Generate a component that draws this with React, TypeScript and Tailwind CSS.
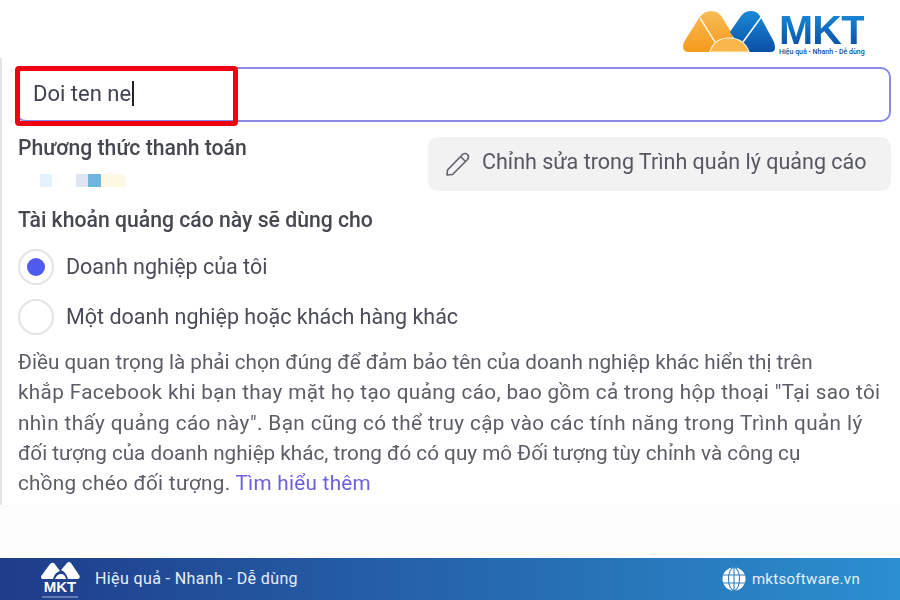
const fontStack = { fontFamily: "Roboto, 'Liberation Sans', sans-serif" };

function TopLogo() {
  return (
    <div className="flex items-start gap-[3px]">
      <svg width="93" height="42" viewBox="0 0 93 42">
        <defs>
          <linearGradient id="org" x1="0" y1="0" x2="0" y2="1">
            <stop offset="0" stopColor="#f7bb55" />
            <stop offset="1" stopColor="#f59a1c" />
          </linearGradient>
          <linearGradient id="blu" x1="0" y1="0" x2="0" y2="1">
            <stop offset="0" stopColor="#1a8ad8" />
            <stop offset="1" stopColor="#0a4fa6" />
          </linearGradient>
        </defs>
        <path d="M5 41 Q-2 40 1 31 L16 7 Q21 0 28 0 Q35 0 39 6 L50 24 L46 41 Z" fill="url(#org)" />
        <path d="M47 21 L58 5 Q62 0 68 0 Q74 0 77 5 L91 31 Q94 41 88 41 L60 41 Z" fill="url(#blu)" />
        <path d="M27 41 Q31 27 46 27 Q61 27 66 41 Z" fill="#f9b64a" stroke="#fff4dc" strokeWidth="1.2" />
        <path d="M17 7 L32 31" stroke="#fff4dc" strokeWidth="1.5" fill="none" />
        <path d="M79 5 L60 31" stroke="#ffffff" strokeWidth="1.5" fill="none" />
      </svg>
      <div className="flex flex-col w-[85px] mt-[2px]">
        <span className="text-[41px] leading-[34px] font-black tracking-[-0.8px] bg-gradient-to-b from-[#1a8ad8] to-[#0a4fa6] bg-clip-text text-transparent" style={{ fontFamily: "'Liberation Sans', sans-serif" }}>
          MKT
        </span>
        <span className="text-[7px] leading-[9px] font-medium text-[#0f4f9c] mt-[1px] whitespace-nowrap">Hiệu quả - Nhanh - Dễ dùng</span>
      </div>
    </div>
  );
}

function FooterLogo() {
  return (
    <div className="flex flex-col items-center w-[40px] pt-[2px]">
      <svg width="39" height="19" viewBox="0 0 39 19">
        <path d="M1 17 Q-1 15 1 13 L9 2 Q11 0 13 1 L19 9 Q14 10 12 17 Z" fill="#fff" />
        <path d="M20 8 L26 1 Q28 -1 30 1 L38 13 Q40 16 37 17 L27 17 Q25 10 20 8Z" fill="#fff" />
        <path d="M14 17 Q16 12 20 12 Q24 12 25 17 Z" fill="#fff" />
      </svg>
      <span className="text-[15px] leading-[12px] font-black text-white" style={{ fontFamily: "'Liberation Sans', sans-serif" }}>MKT</span>
      <div className="w-[36px] h-[2px] bg-white/30 mt-[3px]" />
    </div>
  );
}

function Globe() {
  return (
    <svg width="24" height="24" viewBox="0 0 24 24">
      <circle cx="12" cy="12" r="11.5" fill="#ffffff" />
      <g stroke="#2f7fc0" strokeWidth="1.1" fill="none">
        <ellipse cx="12" cy="12" rx="5.5" ry="11.5" />
        <path d="M12 .5V23.5M1 8H23M1 16H23" />
      </g>
    </svg>
  );
}

function Radio({ checked, label }: { checked?: boolean; label: string }) {
  return (
    <div className="flex items-center h-[36px] gap-[12px]">
      <div className="w-[36px] h-[36px] rounded-full border-2 border-[#e4e4e6] bg-white flex items-center justify-center">
        {checked && <div className="w-[18px] h-[18px] rounded-full bg-[#4f5bf0]" />}
      </div>
      <span className="text-[21.5px] text-[#4a4d57] whitespace-nowrap">{label}</span>
    </div>
  );
}

export default function App() {
  return (
    <div className="w-[900px] h-[600px] flex flex-col bg-white overflow-hidden" style={fontStack}>
      <div className="h-[58px] flex justify-end pt-[11px] pr-[36px]">
        <TopLogo />
      </div>

      <div className="h-[447px] border-l-2 border-[#e4e4e4] pl-[14px] pr-[9px] pt-[9px] blur-[0.5px]">
        {/* tên tài khoản */}
        <div className="relative h-[55px] border-2 border-[#8a8ae6] rounded-[10px] flex items-center pl-[15px] pb-[2px]">
          <span className="text-[22px] text-[#3f4250]">Doi ten ne</span>
          <span className="w-[1.5px] h-[25px] bg-[#222] ml-[1px]" />
          <div className="absolute left-[-3px] top-[-3px] w-[223px] h-[60px] border-[5px] border-[#f0000f] rounded-[4px]" />
        </div>

        <div className="flex justify-between mt-[15px]">
          <div className="pl-[2px]">
            <div className="text-[21.2px] leading-[22px] font-medium text-[#45484f]">Phương thức thanh toán</div>
            <div className="flex mt-[15px] h-[13px] ml-[22px]">
              <div className="w-[12px] bg-[#e3f2fb]" />
              <div className="w-[24px]" />
              <div className="w-[12px] bg-[#dfe6f2]" />
              <div className="w-[13px] bg-[#6fb5dc]" />
              <div className="w-[24px] bg-[#fdf8e2]" />
            </div>
          </div>
          <div className="w-[463px] h-[54px] bg-[#f2f2f2] rounded-[10px] flex items-center pl-[17px] pb-[3px] gap-[11px]">
            <svg width="26" height="26" viewBox="0 0 26 26" fill="none" stroke="#60636b" strokeWidth="1.6" className="mt-[3px]">
              <path d="M2.5 19 L17.5 3.5 Q20 1.5 22.5 3.5 Q24.5 6 22.5 8.5 L7.5 23.5 L2 24 Z" strokeLinejoin="round" />
              <path d="M15.5 5.5 L20.5 10.5" />
            </svg>
            <span className="text-[21.5px] text-[#55585f] whitespace-nowrap">Chỉnh sửa trong Trình quản lý quảng cáo</span>
          </div>
        </div>

        <div className="text-[21.2px] leading-[24px] font-medium text-[#45484f] mt-[17px] pl-[2px]">Tài khoản quảng cáo này sẽ dùng cho</div>
        <div className="flex flex-col gap-[14px] mt-[17px] pl-[2px]">
          <Radio checked label="Doanh nghiệp của tôi" />
          <Radio label="Một doanh nghiệp hoặc khách hàng khác" />
        </div>

        <div className="text-[20.7px] leading-[30.25px] text-[#5b5e66] mt-[12px] pl-[2px] whitespace-nowrap">
          <div>Điều quan trọng là phải chọn đúng để đảm bảo tên của doanh nghiệp khác hiển thị trên</div>
          <div className="tracking-[0.36px]">khắp Facebook khi bạn thay mặt họ tạo quảng cáo, bao gồm cả trong hộp thoại "Tại sao tôi</div>
          <div className="tracking-[0.4px]">nhìn thấy quảng cáo này". Bạn cũng có thể truy cập vào các tính năng trong Trình quản lý</div>
          <div>đối tượng của doanh nghiệp khác, trong đó có quy mô Đối tượng tùy chỉnh và công cụ</div>
          <div className="tracking-[0.28px]">chồng chéo đối tượng. <span className="text-[#6a5fe0]">Tìm hiểu thêm</span></div>
        </div>
      </div>

      <div className="h-[53px] bg-[#fcfcfc]" />

      <div className="h-[42px] bg-gradient-to-r from-[#1f3c8a] to-[#2b8fcf] flex items-center justify-between pl-[40px] pr-[40px]">
        <div className="flex items-center gap-[15px]">
          <FooterLogo />
          <span className="text-[16px] text-[#e8eef8] tracking-[0.38px]">Hiệu quả - Nhanh - Dễ dùng</span>
        </div>
        <div className="flex items-center gap-[6px]">
          <Globe />
          <span className="text-[15px] text-[#e8f2fa] tracking-[0.3px]">mktsoftware.vn</span>
        </div>
      </div>
    </div>
  );
}
